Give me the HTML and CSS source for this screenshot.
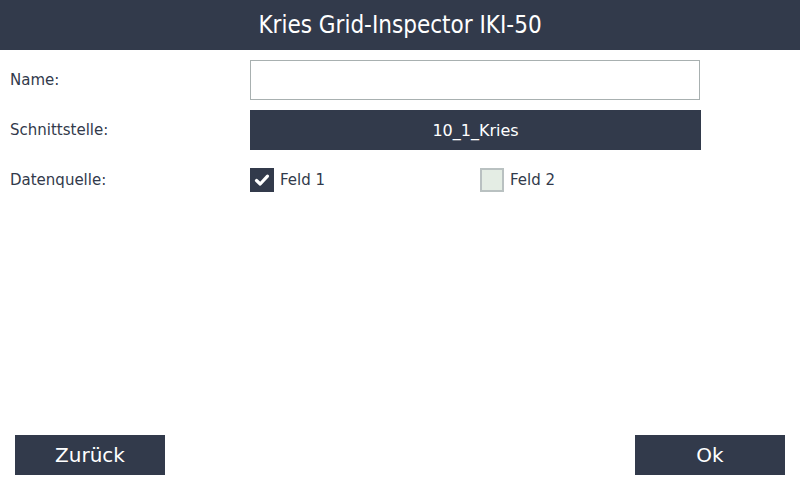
FILE: index.html
```html
<!DOCTYPE html>
<html>
<head>
<meta charset="utf-8">
<link rel="stylesheet" href="styles.css">
</head>
<body>
<div class="screen">
  <header class="titlebar">Kries Grid-Inspector IKI-50</header>
  <main class="form">
    <div class="row">
      <div class="label">Name:</div>
      <div class="field"><div class="input"></div></div>
    </div>
    <div class="row">
      <div class="label">Schnittstelle:</div>
      <div class="field"><div class="select">10_1_Kries</div></div>
    </div>
    <div class="row">
      <div class="label">Datenquelle:</div>
      <div class="field checks">
        <div class="check">
          <span class="box checked">
            <svg width="16" height="16" viewBox="0 0 16 16"><path d="M2.5 8.5 L6.2 12 L13.5 4.2" fill="none" stroke="#fff" stroke-width="3.2" stroke-linecap="round" stroke-linejoin="round"/></svg>
          </span>
          <span class="check-label">Feld 1</span>
        </div>
        <div class="check">
          <span class="box"></span>
          <span class="check-label">Feld 2</span>
        </div>
      </div>
    </div>
  </main>
  <footer class="footer">
    <div class="btn">Zurück</div>
    <div class="btn">Ok</div>
  </footer>
</div>
</body>
</html>
```
FILE: styles.css
```css
* { box-sizing: border-box; }
html, body { margin: 0; padding: 0; background: #fff; }
body { font-family: "DejaVu Sans", sans-serif; color: #323a4b; }
.screen { width: 800px; height: 480px; display: flex; flex-direction: column; }
.titlebar {
  height: 50px; background: #323a4b; color: #fff;
  display: flex; align-items: center; justify-content: center;
  font-family: "DejaVu Sans Condensed", "DejaVu Sans", sans-serif;
  font-stretch: condensed;
  font-size: 24px;
}
.form { flex: 1; padding: 10px 0 0 10px; display: flex; flex-direction: column; gap: 10px; }
.row { display: flex; height: 40px; align-items: center; }
.label { width: 240px; font-size: 15px; }
.field { width: 451px; height: 40px; }
.input { width: 450px; height: 40px; border: 1px solid #a8b0b0; background: #fff; }
.select {
  height: 40px; background: #323a4b; color: #fff; font-size: 16px;
  display: flex; align-items: center; justify-content: center;
}
.checks { display: grid; grid-template-columns: 230px 1fr; align-items: center; }
.check { display: flex; align-items: center; gap: 6px; font-size: 15px; }
.box { width: 24px; height: 24px; border: 2px solid #b9c1c1; background: #e4ede4; display: flex; align-items: center; justify-content: center; }
.box.checked { background: #323a4b; border-color: #323a4b; }
.footer { display: flex; justify-content: space-between; padding: 0 15px 5px; }
.btn {
  width: 150px; height: 40px; background: #323a4b; color: #fff; font-size: 20px;
  display: flex; align-items: center; justify-content: center;
}
```
